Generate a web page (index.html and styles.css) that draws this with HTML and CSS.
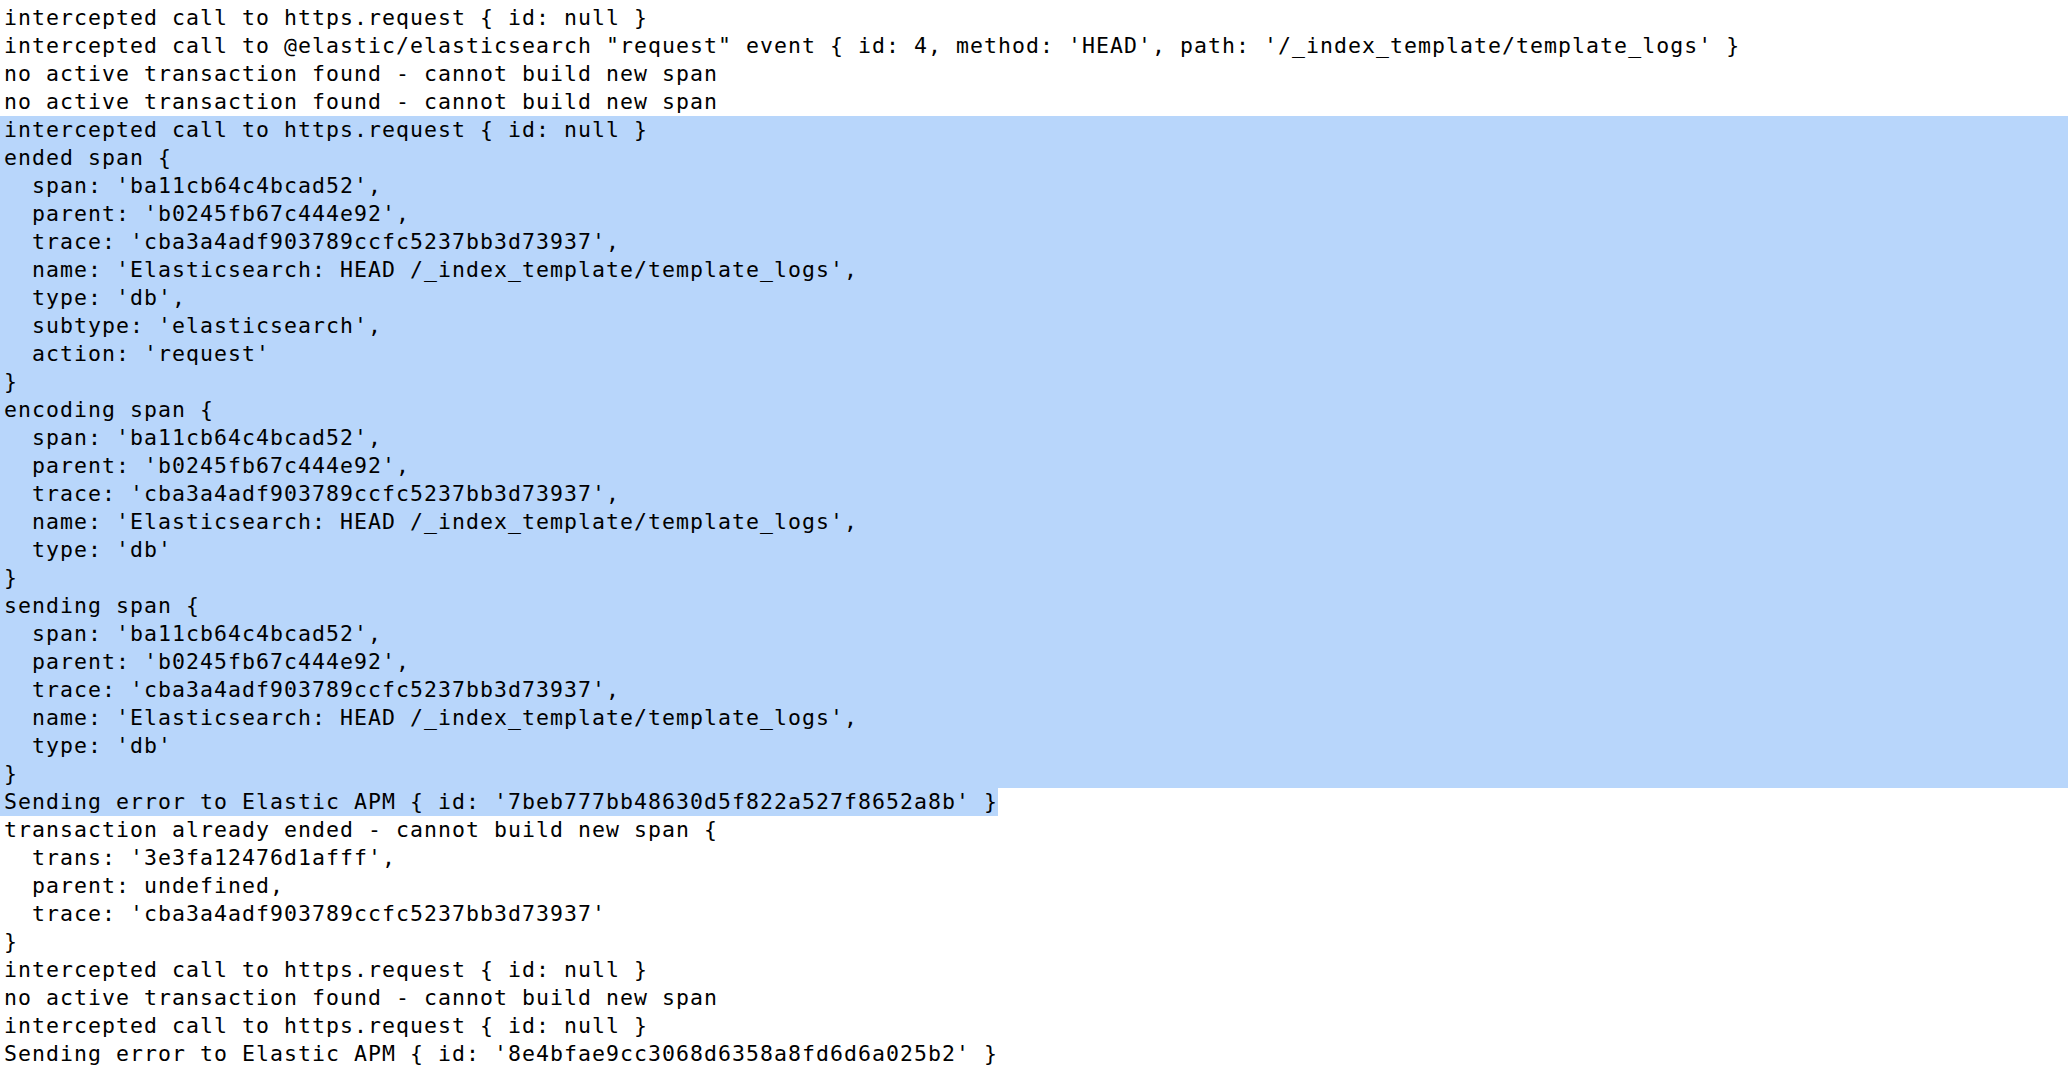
FILE: index.html
```html
<!DOCTYPE html>
<html lang="en">
<head>
<meta charset="utf-8">
<title>Console output</title>
<link rel="stylesheet" href="styles.css">
</head>
<body>
<div class="console">
<div class="line">intercepted call to https.request { id: null }</div>
<div class="line">intercepted call to @elastic/elasticsearch "request" event { id: 4, method: 'HEAD', path: '/_index_template/template_logs' }</div>
<div class="line">no active transaction found - cannot build new span</div>
<div class="line">no active transaction found - cannot build new span</div>
<div class="line sel">intercepted call to https.request { id: null }</div>
<div class="line sel">ended span {</div>
<div class="line sel">  span: 'ba11cb64c4bcad52',</div>
<div class="line sel">  parent: 'b0245fb67c444e92',</div>
<div class="line sel">  trace: 'cba3a4adf903789ccfc5237bb3d73937',</div>
<div class="line sel">  name: 'Elasticsearch: HEAD /_index_template/template_logs',</div>
<div class="line sel">  type: 'db',</div>
<div class="line sel">  subtype: 'elasticsearch',</div>
<div class="line sel">  action: 'request'</div>
<div class="line sel">}</div>
<div class="line sel">encoding span {</div>
<div class="line sel">  span: 'ba11cb64c4bcad52',</div>
<div class="line sel">  parent: 'b0245fb67c444e92',</div>
<div class="line sel">  trace: 'cba3a4adf903789ccfc5237bb3d73937',</div>
<div class="line sel">  name: 'Elasticsearch: HEAD /_index_template/template_logs',</div>
<div class="line sel">  type: 'db'</div>
<div class="line sel">}</div>
<div class="line sel">sending span {</div>
<div class="line sel">  span: 'ba11cb64c4bcad52',</div>
<div class="line sel">  parent: 'b0245fb67c444e92',</div>
<div class="line sel">  trace: 'cba3a4adf903789ccfc5237bb3d73937',</div>
<div class="line sel">  name: 'Elasticsearch: HEAD /_index_template/template_logs',</div>
<div class="line sel">  type: 'db'</div>
<div class="line sel">}</div>
<div class="line sel-end">Sending error to Elastic APM { id: '7beb777bb48630d5f822a527f8652a8b' }</div>
<div class="line">transaction already ended - cannot build new span {</div>
<div class="line">  trans: '3e3fa12476d1afff',</div>
<div class="line">  parent: undefined,</div>
<div class="line">  trace: 'cba3a4adf903789ccfc5237bb3d73937'</div>
<div class="line">}</div>
<div class="line">intercepted call to https.request { id: null }</div>
<div class="line">no active transaction found - cannot build new span</div>
<div class="line">intercepted call to https.request { id: null }</div>
<div class="line">Sending error to Elastic APM { id: '8e4bfae9cc3068d6358a8fd6d6a025b2' }</div>
</div>
</body>
</html>
```

FILE: styles.css
```css
html, body {
  margin: 0;
  padding: 0;
  background: #ffffff;
}

.console {
  padding-top: 4px;
  font-family: "DejaVu Sans Mono", "Liberation Mono", monospace;
  font-size: 21.5px;
  letter-spacing: 1.057px;
  line-height: 28px;
  color: #000000;
}

.line {
  white-space: pre;
  height: 28px;
  padding-left: 4px;
}

.sel {
  background: #b8d6fb;
}

.sel-end {
  background: #b8d6fb;
  width: fit-content;
}
```
